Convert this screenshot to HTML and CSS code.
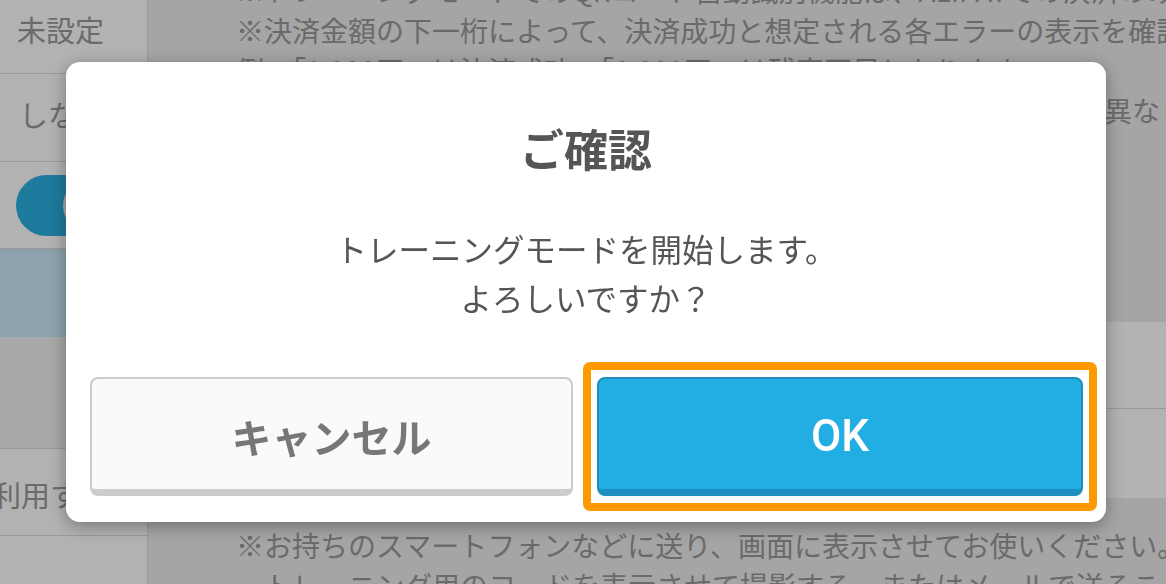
FILE: index.html
```html
<!DOCTYPE html>
<html lang="ja">
<head>
    <meta charset="UTF-8">
    <meta name="viewport" content="width=device-width, initial-scale=1.0">
    <title>トレーニングモード</title>
    <link rel="stylesheet" href="styles.css">
</head>
<body>
    <div class="page">
        <div class="sidebar">
            <div class="side-row first">未設定</div>
            <div class="side-row second">しない</div>
            <div class="side-row toggle-row">
                <div class="toggle"><span class="knob"></span></div>
            </div>
            <div class="side-row selected"></div>
            <div class="side-row muted"></div>
            <div class="side-row cut">利用する</div>
            <div class="side-row"></div>
        </div>
        <div class="main">
            <div class="notes top">
                <p>※トレーニングモードでのQRコード自動識別機能は、ALIPAYでの決済のみ対応しています。</p>
                <p>※決済金額の下一桁によって、決済成功と想定される各エラーの表示を確認できます。</p>
                <p>例：「1,000円」は決済成功、「1,001円」は残高不足となります。</p>
                <p>※トレーニングモードの画面表示は、実際の決済時の画面とは内容が異なります。</p>
            </div>
            <div class="card">
                <div class="card-row"></div>
                <div class="card-row"></div>
            </div>
            <div class="notes bottom">
                <p>※お持ちのスマートフォンなどに送り、画面に表示させてお使いください。</p>
                <p>　トレーニング用のコードを表示させて撮影する、またはメールで送ることができます。</p>
            </div>
        </div>
    </div>

    <div class="overlay"></div>

    <div class="modal">
        <h2 class="modal-title">ご確認</h2>
        <p class="modal-text">トレーニングモードを開始します。<br>よろしいですか？</p>
        <div class="actions">
            <button class="btn btn-cancel">キャンセル</button>
            <div class="focus-ring">
                <button class="btn btn-ok">OK</button>
            </div>
        </div>
    </div>
</body>
</html>
```

FILE: styles.css
```css
body {
    margin: 0;
    overflow: hidden;
    font-family: "Noto Sans CJK JP", "Noto Sans", sans-serif;
    color: #999;
}
.page {
    display: flex;
    height: 584px;
}
.sidebar {
    width: 147px;
    flex-shrink: 0;
    background: white;
    border-right: 1px solid #dcdcdc;
    overflow: hidden;
}
.side-row {
    box-sizing: border-box;
    display: flex;
    align-items: center;
    padding-left: 17px;
    border-bottom: 1px solid #dadada;
    font-size: 29px;
    white-space: nowrap;
    height: 87px;
}
.side-row.first {
    height: 74px;
    padding-bottom: 16px;
}
.side-row.second {
    height: 88px;
    padding-left: 19px;
    padding-bottom: 8px;
}
.side-row.toggle-row {
    padding-left: 16px;
}
.toggle {
    width: 104px;
    height: 61px;
    border-radius: 31px;
    background: #2bb0e2;
    position: relative;
}
.knob {
    position: absolute;
    top: 4px;
    right: 4px;
    width: 53px;
    height: 53px;
    border-radius: 50%;
    background: #f4f4f4;
}
.side-row.selected {
    height: 88px;
    background: #cce9f9;
    border-bottom: none;
}
.side-row.muted {
    height: 112px;
    background: #f2f2f2;
}
.side-row.cut {
    padding-left: 0;
    text-indent: -8px;
    padding-top: 4px;
}
.main {
    flex: 1;
    background: #ededed;
    overflow: hidden;
}
.notes p {
    margin: 0;
    padding-left: 88px;
    font-size: 28px;
    line-height: 40px;
    white-space: nowrap;
}
.notes.top {
    margin-top: -30px;
}
.card {
    margin-top: 192px;
    background: white;
}
.card-row {
    height: 86px;
}
.card-row + .card-row {
    height: 89px;
    border-top: 1px solid #dcdcdc;
}
.notes.bottom {
    margin-top: 27px;
}
.overlay {
    position: fixed;
    inset: 0;
    background: rgba(0, 0, 0, 0.3);
}
.modal {
    position: fixed;
    left: 66px;
    top: 62px;
    width: 1040px;
    height: 460px;
    box-sizing: border-box;
    background: white;
    border-radius: 14px;
    box-shadow: 0 4px 18px rgba(0, 0, 0, 0.35);
    padding-top: 54px;
    text-align: center;
    color: #555;
}
.modal-title {
    margin: 0;
    font-size: 44px;
    line-height: 64px;
    font-weight: 700;
}
.modal-text {
    margin: 44px 0 0;
    font-size: 31.5px;
    line-height: 49px;
}
.actions {
    display: flex;
    align-items: center;
    gap: 10px;
    padding: 0 9px 0 24px;
    margin-top: 40px;
}
.btn {
    height: 119px;
    box-sizing: border-box;
    border-radius: 8px;
    font-family: "Noto Sans CJK JP", sans-serif;
    cursor: pointer;
}
.btn-cancel {
    flex: 1;
    background: #fafafa;
    border: 2px solid #cccccc;
    border-bottom-width: 7px;
    color: #777;
    font-size: 40px;
    font-weight: 700;
    padding-top: 4px;
}
.focus-ring {
    width: 514px;
    box-sizing: border-box;
    border: 8px solid #ff9900;
    border-radius: 7px;
    padding: 7px 6px;
}
.btn-ok {
    display: block;
    width: 100%;
    background: #22ade3;
    border: 2px solid #1d90c0;
    border-bottom-width: 7px;
    color: white;
    font-family: Roboto, sans-serif;
    font-size: 44px;
    font-weight: 500;
    padding-top: 4px;
}
```
